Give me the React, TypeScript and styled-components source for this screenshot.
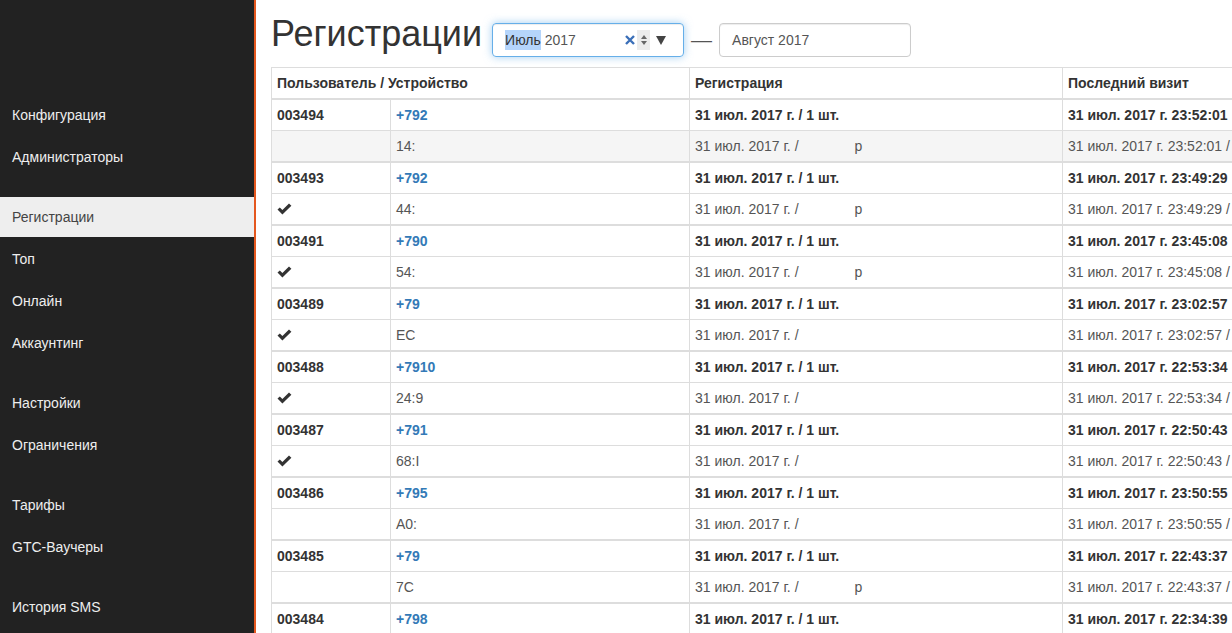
import React from 'react';
import styled, { createGlobalStyle } from 'styled-components';

const GlobalStyle = createGlobalStyle`
  html, body {
    margin: 0;
    padding: 0;
    height: 100%;
    overflow: hidden;
    background: #fff;
  }
  body {
    font-family: "Liberation Sans", Arial, sans-serif;
    font-size: 14px;
    line-height: 20px;
    color: #333;
  }
  * { box-sizing: border-box; }
`;

const menu = [
  ['Конфигурация', 'Администраторы'],
  ['Регистрации', 'Топ', 'Онлайн', 'Аккаунтинг'],
  ['Настройки', 'Ограничения'],
  ['Тарифы', 'GTC-Ваучеры'],
  ['История SMS'],
];

type Reg = {
  id: string;
  phone: string;
  time: string;
  mac: string;
  checked: boolean;
  tail?: string;
  hover?: boolean;
};

const rows: Reg[] = [
  { id: '003494', phone: '+792', time: '23:52:01', mac: '14:', checked: false, tail: 'р', hover: true },
  { id: '003493', phone: '+792', time: '23:49:29', mac: '44:', checked: true, tail: 'р' },
  { id: '003491', phone: '+790', time: '23:45:08', mac: '54:', checked: true, tail: 'р' },
  { id: '003489', phone: '+79', time: '23:02:57', mac: 'EC', checked: true },
  { id: '003488', phone: '+7910', time: '22:53:34', mac: '24:9', checked: true },
  { id: '003487', phone: '+791', time: '22:50:43', mac: '68:I', checked: true },
  { id: '003486', phone: '+795', time: '23:50:55', mac: 'A0:', checked: false },
  { id: '003485', phone: '+79', time: '22:43:37', mac: '7C', checked: false, tail: 'р' },
  { id: '003484', phone: '+798', time: '22:34:39', mac: '', checked: false },
];

const OkIcon = () => (
  <svg width="15" height="12" viewBox="0 0 15 12">
    <path d="M0.5 6.6 L2.8 4.4 L5.4 6.9 L12 0.4 L14.4 2.8 L5.4 11.6 Z" fill="#333" />
  </svg>
);

const App = () => {
  return (
    <>
      <GlobalStyle />
      <Layout>
        <Sidebar>
          {menu.map((group, gi) => (
            <NavGroup key={gi}>
              {group.map((item) => (
                <NavItem key={item} $active={item === 'Регистрации'}>
                  {item}
                </NavItem>
              ))}
            </NavGroup>
          ))}
        </Sidebar>

        <Main>
          <Header>
            <Title>Регистрации</Title>
            <Range>
              <DateBox $focused>
                <Selected>Июль</Selected>&nbsp;2017
                <Controls>
                  <Clear>
                    <svg width="10" height="10" viewBox="0 0 10 10">
                      <path d="M1 1 L9 9 M9 1 L1 9" stroke="#3a6fb8" strokeWidth="2.4" />
                    </svg>
                  </Clear>
                  <Spin>
                    <svg width="8" height="12" viewBox="0 0 8 12">
                      <path d="M4 1 L7 5 L1 5 Z M1 7 L7 7 L4 11 Z" fill="#666" />
                    </svg>
                  </Spin>
                  <Drop>
                    <svg width="10" height="9" viewBox="0 0 10 9">
                      <path d="M0 0 L10 0 L5 9 Z" fill="#444" />
                    </svg>
                  </Drop>
                </Controls>
              </DateBox>
              <Dash>—</Dash>
              <DateBox>Август 2017</DateBox>
            </Range>
          </Header>

          <Table>
            <colgroup>
              <col style={{ width: 119 }} />
              <col style={{ width: 299 }} />
              <col style={{ width: 373 }} />
              <col style={{ width: 330 }} />
            </colgroup>
            <thead>
              <tr>
                <Th colSpan={2}>Пользователь / Устройство</Th>
                <Th>Регистрация</Th>
                <Th>Последний визит</Th>
              </tr>
            </thead>
            {rows.map((r) => (
              <tbody key={r.id}>
                <MainRow>
                  <Td>{r.id}</Td>
                  <Td><Phone>{r.phone}</Phone></Td>
                  <Td>31 июл. 2017 г. / 1 шт.</Td>
                  <Td>31 июл. 2017 г. {r.time}</Td>
                </MainRow>
                <DeviceRow $hover={r.hover}>
                  <Td>{r.checked && <OkIcon />}</Td>
                  <Td>{r.mac}</Td>
                  <Td>
                    31 июл. 2017 г. /{r.tail && <Gap />}{r.tail}
                  </Td>
                  <Td>31 июл. 2017 г. {r.time} /</Td>
                </DeviceRow>
              </tbody>
            ))}
          </Table>
        </Main>
      </Layout>
    </>
  );
};

const Layout = styled.div`
  display: flex;
  height: 633px;
  width: 100%;
`;

const Sidebar = styled.nav`
  width: 256px;
  flex-shrink: 0;
  background: #222;
  border-right: 2px solid #e4571e;
  padding-top: 95px;
`;

const NavGroup = styled.div`
  display: flex;
  flex-direction: column;
  gap: 2px;
  margin-bottom: 20px;
`;

const NavItem = styled.div<{ $active?: boolean }>`
  height: 40px;
  padding: 10px 12px;
  font-size: 14px;
  line-height: 20px;
  color: ${(p) => (p.$active ? '#444' : '#eee')};
  background: ${(p) => (p.$active ? '#eee' : 'transparent')};
  cursor: pointer;
`;

const Main = styled.main`
  flex: 1;
  min-width: 0;
  overflow: hidden;
  padding-left: 15px;
`;

const Header = styled.div`
  display: flex;
  align-items: flex-start;
  padding-top: 14px;
`;

const Title = styled.h1`
  margin: 0 10px 0 0;
  font-size: 36px;
  line-height: 40px;
  font-weight: 500;
  color: #333;
`;

const Range = styled.div`
  display: flex;
  align-items: center;
  margin-top: 9px;
`;

const DateBox = styled.div<{ $focused?: boolean }>`
  display: flex;
  align-items: center;
  width: 192px;
  height: 34px;
  padding: 0 12px;
  border: 1px solid ${(p) => (p.$focused ? '#66afe9' : '#ccc')};
  border-radius: 4px;
  color: #555;
  font-size: 14px;
  box-shadow: ${(p) =>
    p.$focused
      ? 'inset 0 1px 1px rgba(0,0,0,.075), 0 0 8px rgba(102,175,233,.6)'
      : 'inset 0 1px 1px rgba(0,0,0,.075)'};
`;

const Selected = styled.span`
  background: #b5d5fb;
  color: #333;
`;

const Controls = styled.div`
  margin-left: auto;
  margin-right: 5px;
  display: flex;
  align-items: center;
  gap: 1px;
`;

const Clear = styled.span`
  display: flex;
  margin-right: 1px;
`;

const Spin = styled.span`
  display: flex;
  align-items: center;
  justify-content: center;
  width: 13px;
  height: 20px;
  background: #ececec;
`;

const Drop = styled.span`
  display: flex;
  margin-left: 5px;
`;

const Dash = styled.span`
  margin: 0 7px 0 7px;
  font-size: 21px;
  line-height: 20px;
  color: #555;
`;

const Table = styled.table`
  margin-top: 10px;
  border-collapse: collapse;
  table-layout: fixed;
  width: 1121px;
  border: 1px solid #ddd;
`;

const Th = styled.th`
  text-align: left;
  font-weight: bold;
  padding: 5px;
  height: 30px;
  border: 1px solid #ddd;
  border-bottom: 0;
  white-space: nowrap;
`;

const Td = styled.td`
  padding: 5px;
  height: 30px;
  border: 1px solid #ddd;
  white-space: nowrap;
  overflow: hidden;
  vertical-align: middle;
  svg { display: block; }
`;

const MainRow = styled.tr`
  font-weight: bold;
  color: #333;
  td { border-top: 2px solid #ddd; }
`;

const DeviceRow = styled.tr<{ $hover?: boolean }>`
  color: #555;
  background: ${(p) => (p.$hover ? '#f5f5f5' : '#fff')};
`;

const Phone = styled.a`
  color: #337ab7;
  text-decoration: none;
  font-weight: bold;
`;

const Gap = styled.span`
  display: inline-block;
  width: 56px;
`;

export default App;
